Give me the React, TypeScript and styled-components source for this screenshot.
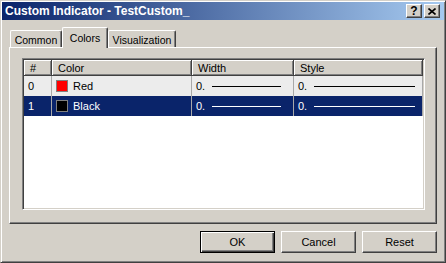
import React from "react";
import styled, { createGlobalStyle } from "styled-components";

const GlobalStyle = createGlobalStyle`
  html, body {
    margin: 0;
    padding: 0;
    background: #d4d0c8;
  }
  body {
    font-family: "Liberation Sans", Arial, sans-serif;
    font-size: 11px;
    color: #000;
  }
  * {
    box-sizing: border-box;
  }
`;

const Window = styled.div`
  width: 446px;
  height: 263px;
  display: flex;
  flex-direction: column;
  padding: 1px;
  background: #d4d0c8;
  border: 1px solid;
  border-color: #d4d0c8 #404040 #404040 #d4d0c8;
  box-shadow: inset 1px 1px #fff, inset -1px -1px #808080;
`;

const TitleBar = styled.div`
  height: 18px;
  display: flex;
  align-items: center;
  padding: 0 4px 0 3px;
  background: linear-gradient(to right, #0a246a, #a6caf0);
`;

const TitleText = styled.div`
  flex: 1;
  color: #fff;
  font-weight: bold;
  font-size: 12px;
  white-space: nowrap;
`;

const CaptionButton = styled.div<{ $gap?: number }>`
  width: 16px;
  height: 14px;
  margin-left: ${(p) => p.$gap || 0}px;
  display: flex;
  align-items: center;
  justify-content: center;
  background: #d4d0c8;
  border: 1px solid;
  border-color: #fff #404040 #404040 #fff;
  box-shadow: inset -1px -1px #808080;
  font-weight: bold;
  font-size: 12px;
  line-height: 1;
`;

const Body = styled.div`
  flex: 1;
  display: flex;
  flex-direction: column;
  padding: 7px 7px 0;
`;

const TabStrip = styled.div`
  height: 20px;
  display: flex;
  align-items: flex-end;
  padding-left: 1px;
`;

const Tab = styled.div<{ $width: number; $active?: boolean }>`
  width: ${(p) => p.$width}px;
  height: ${(p) => (p.$active ? 21 : 17)}px;
  margin-bottom: ${(p) => (p.$active ? -1 : 0)}px;
  position: relative;
  z-index: ${(p) => (p.$active ? 1 : 0)};
  display: flex;
  align-items: center;
  justify-content: center;
  padding-top: ${(p) => (p.$active ? 0 : 1)}px;
  background: #d4d0c8;
  border-top: 1px solid #fff;
  border-left: 1px solid #fff;
  border-right: 1px solid #404040;
  border-radius: 2px 2px 0 0;
  box-shadow: inset -1px 0 #808080;
  font-size: 10.5px;
  white-space: nowrap;
`;

const Panel = styled.div`
  height: 177px;
  display: flex;
  padding: 10px 11px 13px 12px;
  border: 1px solid;
  border-color: #fff #404040 #404040 #fff;
  box-shadow: inset -1px -1px #808080;
`;

const ListView = styled.div`
  flex: 1;
  display: flex;
  flex-direction: column;
  padding: 1px;
  background: #fff;
  border: 1px solid;
  border-color: #808080 #fff #fff #808080;
  box-shadow: inset 1px 1px #404040, inset -1px -1px #d4d0c8;
  overflow: hidden;
`;

const columns = "28px 140px 102px 129px";

const HeaderRow = styled.div`
  display: grid;
  grid-template-columns: ${columns};
  height: 16px;
`;

const HeaderCell = styled.div`
  display: flex;
  align-items: center;
  padding-left: 6px;
  background: #d4d0c8;
  border-right: 1px solid #404040;
  border-bottom: 1px solid #404040;
  box-shadow: inset 1px 1px #fff, inset -1px -1px #808080;
`;

const Row = styled.div<{ $selected?: boolean }>`
  display: grid;
  grid-template-columns: ${columns};
  height: 20px;
  background: ${(p) => (p.$selected ? "#0a246a" : "#ececec")};
  color: ${(p) => (p.$selected ? "#fff" : "#000")};
`;

const Cell = styled.div`
  display: flex;
  align-items: center;
  padding-left: 4px;
  border-right: 1px solid #a8a8a8;
`;

const Swatch = styled.span<{ $color: string }>`
  width: 12px;
  height: 12px;
  margin-right: 5px;
  background: ${(p) => p.$color};
  border: 1px solid #808080;
`;

const Line = styled.span<{ $right: number }>`
  flex: 1;
  height: 1px;
  margin: 1px ${(p) => p.$right}px 0 7px;
  background: currentColor;
`;

const ButtonRow = styled.div`
  display: flex;
  justify-content: flex-end;
  gap: 6px;
  margin-top: 7px;
`;

const Button = styled.div<{ $default?: boolean }>`
  width: 75px;
  height: 22px;
  display: flex;
  align-items: center;
  justify-content: center;
  background: #d4d0c8;
  border: 1px solid;
  border-color: ${(p) => (p.$default ? "#000" : "#fff #404040 #404040 #fff")};
  box-shadow: ${(p) =>
    p.$default
      ? "inset 1px 1px #fff, inset -1px -1px #404040, inset -2px -2px #808080"
      : "inset -1px -1px #808080"};
`;

const rows = [
  { id: "0", name: "Red", color: "#ff0000" },
  { id: "1", name: "Black", color: "#000000", selected: true },
];

const App: React.FC = () => {
  return (
    <>
      <GlobalStyle />
      <Window>
        <TitleBar>
          <TitleText>Custom Indicator - TestCustom_</TitleText>
          <CaptionButton>?</CaptionButton>
          <CaptionButton $gap={2}>
            <svg width="8" height="7" viewBox="0 0 8 7">
              <path d="M0.5 0.5 L7.5 6.5 M7.5 0.5 L0.5 6.5" stroke="#000" strokeWidth="1.6" />
            </svg>
          </CaptionButton>
        </TitleBar>
        <Body>
          <TabStrip>
            <Tab $width={52}>Common</Tab>
            <Tab $width={46} $active>
              Colors
            </Tab>
            <Tab $width={68}>Visualization</Tab>
          </TabStrip>
          <Panel>
            <ListView>
              <HeaderRow>
                <HeaderCell>#</HeaderCell>
                <HeaderCell>Color</HeaderCell>
                <HeaderCell>Width</HeaderCell>
                <HeaderCell>Style</HeaderCell>
              </HeaderRow>
              {rows.map((r) => (
                <Row key={r.id} $selected={r.selected}>
                  <Cell>{r.id}</Cell>
                  <Cell>
                    <Swatch $color={r.color} />
                    {r.name}
                  </Cell>
                  <Cell>
                    0.
                    <Line $right={12} />
                  </Cell>
                  <Cell>
                    0.
                    <Line $right={7} />
                  </Cell>
                </Row>
              ))}
            </ListView>
          </Panel>
          <ButtonRow>
            <Button $default>OK</Button>
            <Button>Cancel</Button>
            <Button>Reset</Button>
          </ButtonRow>
        </Body>
      </Window>
    </>
  );
};

export default App;
